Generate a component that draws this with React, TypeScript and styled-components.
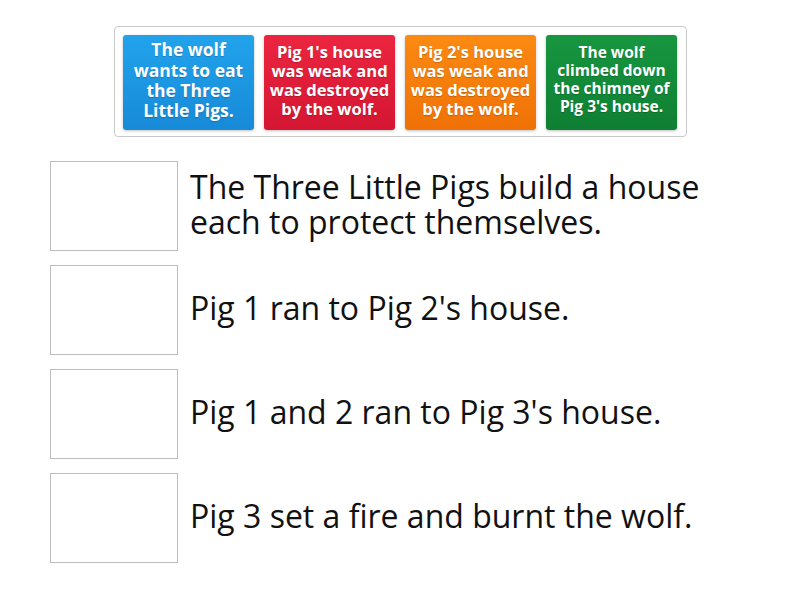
import React from 'react';
import styled, { createGlobalStyle } from 'styled-components';

const GlobalStyle = createGlobalStyle`
  html, body {
    margin: 0;
    padding: 0;
    background: #ffffff;
    font-family: "Open Sans", "Liberation Sans", sans-serif;
  }
`;

const Page = styled.div`
  width: 800px;
  height: 600px;
  display: flex;
  flex-direction: column;
  padding-top: 26px;
  box-sizing: border-box;
`;

const Tray = styled.div`
  margin-left: 114px;
  width: 573px;
  box-sizing: border-box;
  border: 1px solid #c9c9c9;
  border-radius: 4px;
  padding: 8px 9px 6px 8px;
  display: flex;
  gap: 10px;
`;

const palette: Record<string, [string, string]> = {
  blue: ['#22a3ec', '#178ad8'],
  red: ['#ec2540', '#d41632'],
  orange: ['#fb8a12', '#f07106'],
  green: ['#17963f', '#0f7f33'],
};

const Card = styled.div<{ $tone: string; $size: number }>`
  width: 131px;
  height: 95px;
  box-sizing: border-box;
  border-radius: 3px;
  background: linear-gradient(
    180deg,
    ${(p) => palette[p.$tone][0]},
    ${(p) => palette[p.$tone][1]}
  );
  box-shadow: 0 1px 3px rgba(0, 0, 0, 0.25);
  display: flex;
  align-items: center;
  justify-content: center;
  text-align: center;
  padding: 0 3px 5px;
  color: #ffffff;
  font-weight: 700;
  font-size: ${(p) => p.$size}px;
  line-height: 1.16;
  text-shadow: 0 1px 1px rgba(0, 0, 0, 0.2);
`;

const Slots = styled.div`
  margin-top: 24px;
  padding-left: 50px;
  display: flex;
  flex-direction: column;
  gap: 14px;
`;

const Row = styled.div`
  display: flex;
  align-items: center;
  gap: 12px;
`;

const Slot = styled.div`
  width: 128px;
  height: 90px;
  box-sizing: border-box;
  border: 1px solid #bdbdbd;
  flex-shrink: 0;
`;

const Sentence = styled.div`
  font-size: 32px;
  line-height: 35px;
  color: #111111;
  width: 540px;
  padding-bottom: 5px;
`;

const cards = [
  { tone: 'blue', size: 17.5, text: 'The wolf wants to eat the Three Little Pigs.' },
  { tone: 'red', size: 16.5, text: "Pig 1's house was weak and was destroyed by the wolf." },
  { tone: 'orange', size: 16.5, text: "Pig 2's house was weak and was destroyed by the wolf." },
  { tone: 'green', size: 15.5, text: "The wolf climbed down the chimney of Pig 3's house." },
];

const sentences = [
  'The Three Little Pigs build a house each to protect themselves.',
  "Pig 1 ran to Pig 2's house.",
  "Pig 1 and 2 ran to Pig 3's house.",
  'Pig 3 set a fire and burnt the wolf.',
];

const App = () => {
  return (
    <Page>
      <GlobalStyle />
      <Tray>
        {cards.map((c) => (
          <Card key={c.tone} $tone={c.tone} $size={c.size}>
            {c.text}
          </Card>
        ))}
      </Tray>
      <Slots>
        {sentences.map((s) => (
          <Row key={s}>
            <Slot />
            <Sentence>{s}</Sentence>
          </Row>
        ))}
      </Slots>
    </Page>
  );
};

export default App;
